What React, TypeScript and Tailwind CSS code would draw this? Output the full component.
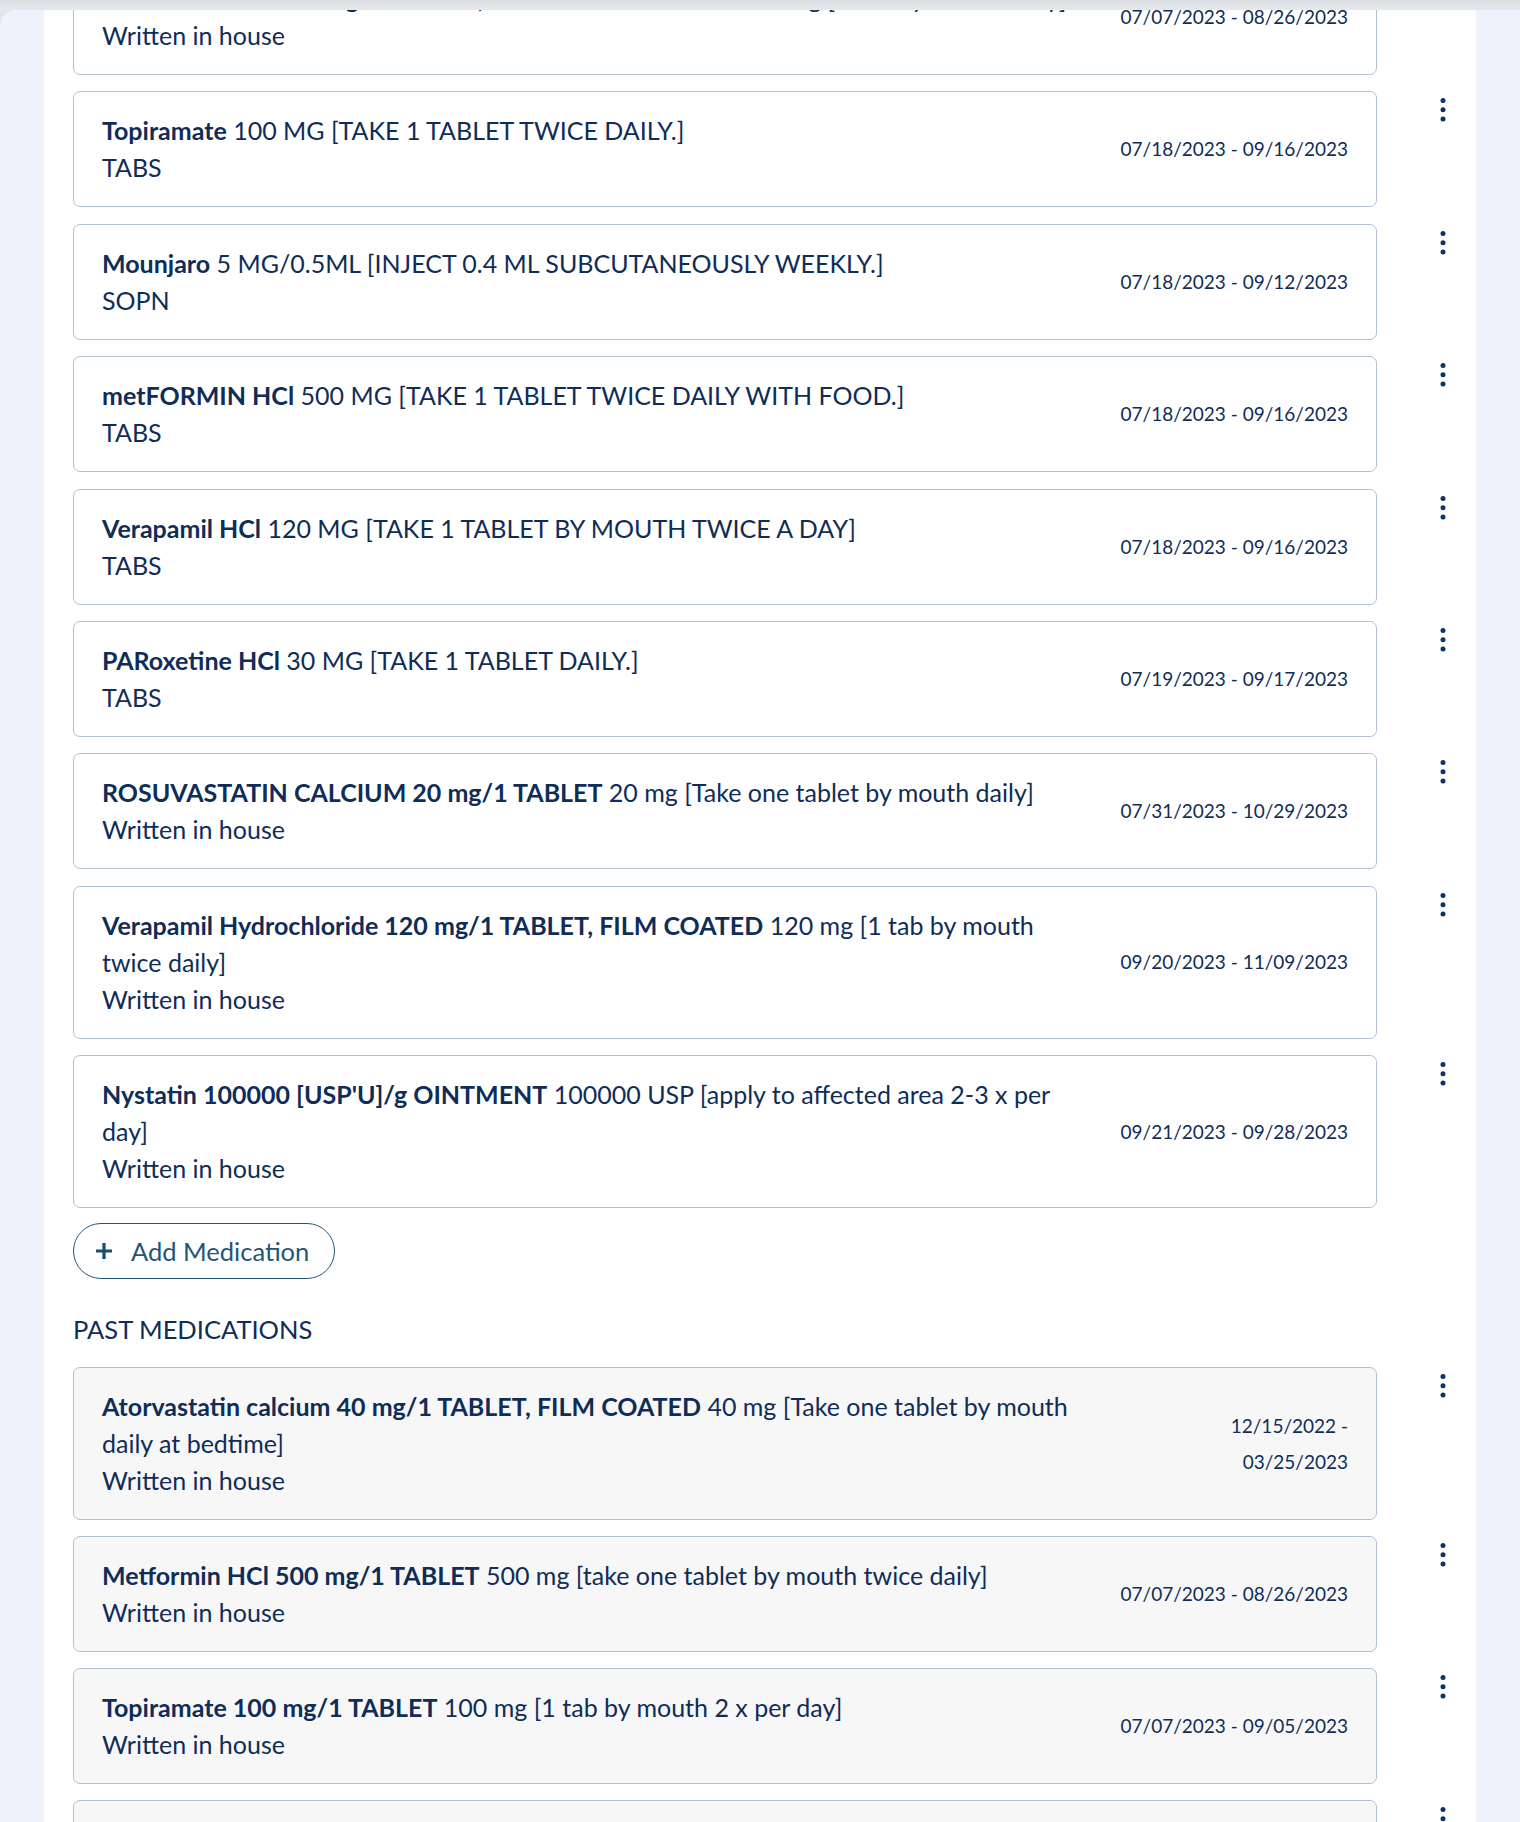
import React from "react";

type Med = {
  name: string;
  rest: string;
  sub: string;
  date: string;
  dateClass?: string;
};

const current: Med[] = [
  {
    name: "Metformin HCl 500 mg/1 TABLET, EXTENDED RELEASE",
    rest: "500 mg [1 tab by mouth daily]",
    sub: "Written in house",
    date: "07/07/2023 - 08/26/2023",
  },
  { name: "Topiramate", rest: "100 MG [TAKE 1 TABLET TWICE DAILY.]", sub: "TABS", date: "07/18/2023 - 09/16/2023" },
  { name: "Mounjaro", rest: "5 MG/0.5ML [INJECT 0.4 ML SUBCUTANEOUSLY WEEKLY.]", sub: "SOPN", date: "07/18/2023 - 09/12/2023" },
  { name: "metFORMIN HCl", rest: "500 MG [TAKE 1 TABLET TWICE DAILY WITH FOOD.]", sub: "TABS", date: "07/18/2023 - 09/16/2023" },
  { name: "Verapamil HCl", rest: "120 MG [TAKE 1 TABLET BY MOUTH TWICE A DAY]", sub: "TABS", date: "07/18/2023 - 09/16/2023" },
  { name: "PARoxetine HCl", rest: "30 MG [TAKE 1 TABLET DAILY.]", sub: "TABS", date: "07/19/2023 - 09/17/2023" },
  {
    name: "ROSUVASTATIN CALCIUM 20 mg/1 TABLET",
    rest: "20 mg [Take one tablet by mouth daily]",
    sub: "Written in house",
    date: "07/31/2023 - 10/29/2023",
  },
  {
    name: "Verapamil Hydrochloride 120 mg/1 TABLET, FILM COATED",
    rest: "120 mg [1 tab by mouth twice daily]",
    sub: "Written in house",
    date: "09/20/2023 - 11/09/2023",
  },
  {
    name: "Nystatin 100000 [USP'U]/g OINTMENT",
    rest: "100000 USP [apply to affected area 2-3 x per day]",
    sub: "Written in house",
    date: "09/21/2023 - 09/28/2023",
  },
];

const past: Med[] = [
  {
    name: "Atorvastatin calcium 40 mg/1 TABLET, FILM COATED",
    rest: "40 mg [Take one tablet by mouth daily at bedtime]",
    sub: "Written in house",
    date: "12/15/2022 - 03/25/2023",
    dateClass: "w-[124px]",
  },
  {
    name: "Metformin HCl 500 mg/1 TABLET",
    rest: "500 mg [take one tablet by mouth twice daily]",
    sub: "Written in house",
    date: "07/07/2023 - 08/26/2023",
  },
  {
    name: "Topiramate 100 mg/1 TABLET",
    rest: "100 mg [1 tab by mouth 2 x per day]",
    sub: "Written in house",
    date: "07/07/2023 - 09/05/2023",
  },
  {
    name: "Lisinopril 10 mg/1 TABLET",
    rest: "10 mg [Take one tablet by mouth daily]",
    sub: "Written in house",
    date: "07/07/2023 - 09/05/2023",
  },
];

function Kebab() {
  return (
    <svg width="6" height="24" viewBox="0 0 6 24" className="block">
      <circle cx="3" cy="2.6" r="2.5" fill="#0b3466" />
      <circle cx="3" cy="11.8" r="2.5" fill="#0b3466" />
      <circle cx="3" cy="21" r="2.5" fill="#0b3466" />
    </svg>
  );
}

function MedRow({ m, pastItem }: { m: Med; pastItem?: boolean }) {
  return (
    <div className="flex items-start">
      <div
        className={`w-[1304px] shrink-0 rounded-[7px] border border-[#b3c0d4] px-[28px] py-[20px] flex items-center justify-between ${
          pastItem ? "bg-[#f7f7f8]" : "bg-white"
        }`}
      >
        <div className="max-w-[990px] text-[25px] leading-[37px] text-[#0f2d57]">
          <div>
            <span className="font-bold">{m.name}</span> {m.rest}
          </div>
          <div>{m.sub}</div>
        </div>
        <div
          className={`text-right text-[19px] leading-[36px] text-[#0f2d57] ${m.dateClass ?? "shrink-0"}`}
        >
          {m.date}
        </div>
      </div>
      <div className="pl-[63px] pt-[7px]">
        <Kebab />
      </div>
    </div>
  );
}

export default function App() {
  return (
    <div
      className="w-[1520px] h-[1822px] overflow-hidden bg-[#e3e5e8]"
      style={{ fontFamily: "Lato, 'Noto Sans', sans-serif" }}
    >
      <div className="h-[10px] bg-gradient-to-b from-[#dcdfe3] to-[#e6e8eb]" />
      <div className="h-[1812px] rounded-tl-[16px] bg-[#eef3fb] px-[44px]">
        <div className="h-full overflow-hidden bg-white pl-[29px]">
          <div className="-mt-[51px] flex flex-col gap-[16.4px]">
            {current.map((m, i) => (
              <MedRow key={i} m={m} />
            ))}
          </div>
          <button className="mt-[15px] flex h-[56px] w-[262px] items-center rounded-full border border-[#1f5678] pl-[20px] text-[25.5px] text-[#1f5678]">
            <svg width="20" height="20" viewBox="0 0 20 20" className="mr-[17px]">
              <path d="M10 2v16M2 10h16" stroke="#1a4d6d" strokeWidth="3.2" />
            </svg>
            Add Medication
          </button>
          <div className="mt-[32px] mb-[19px] text-[25.5px] leading-[37px] text-[#0f2d57]">PAST MEDICATIONS</div>
          <div className="flex flex-col gap-[16px]">
            {past.map((m, i) => (
              <MedRow key={i} m={m} pastItem />
            ))}
          </div>
        </div>
      </div>
    </div>
  );
}
